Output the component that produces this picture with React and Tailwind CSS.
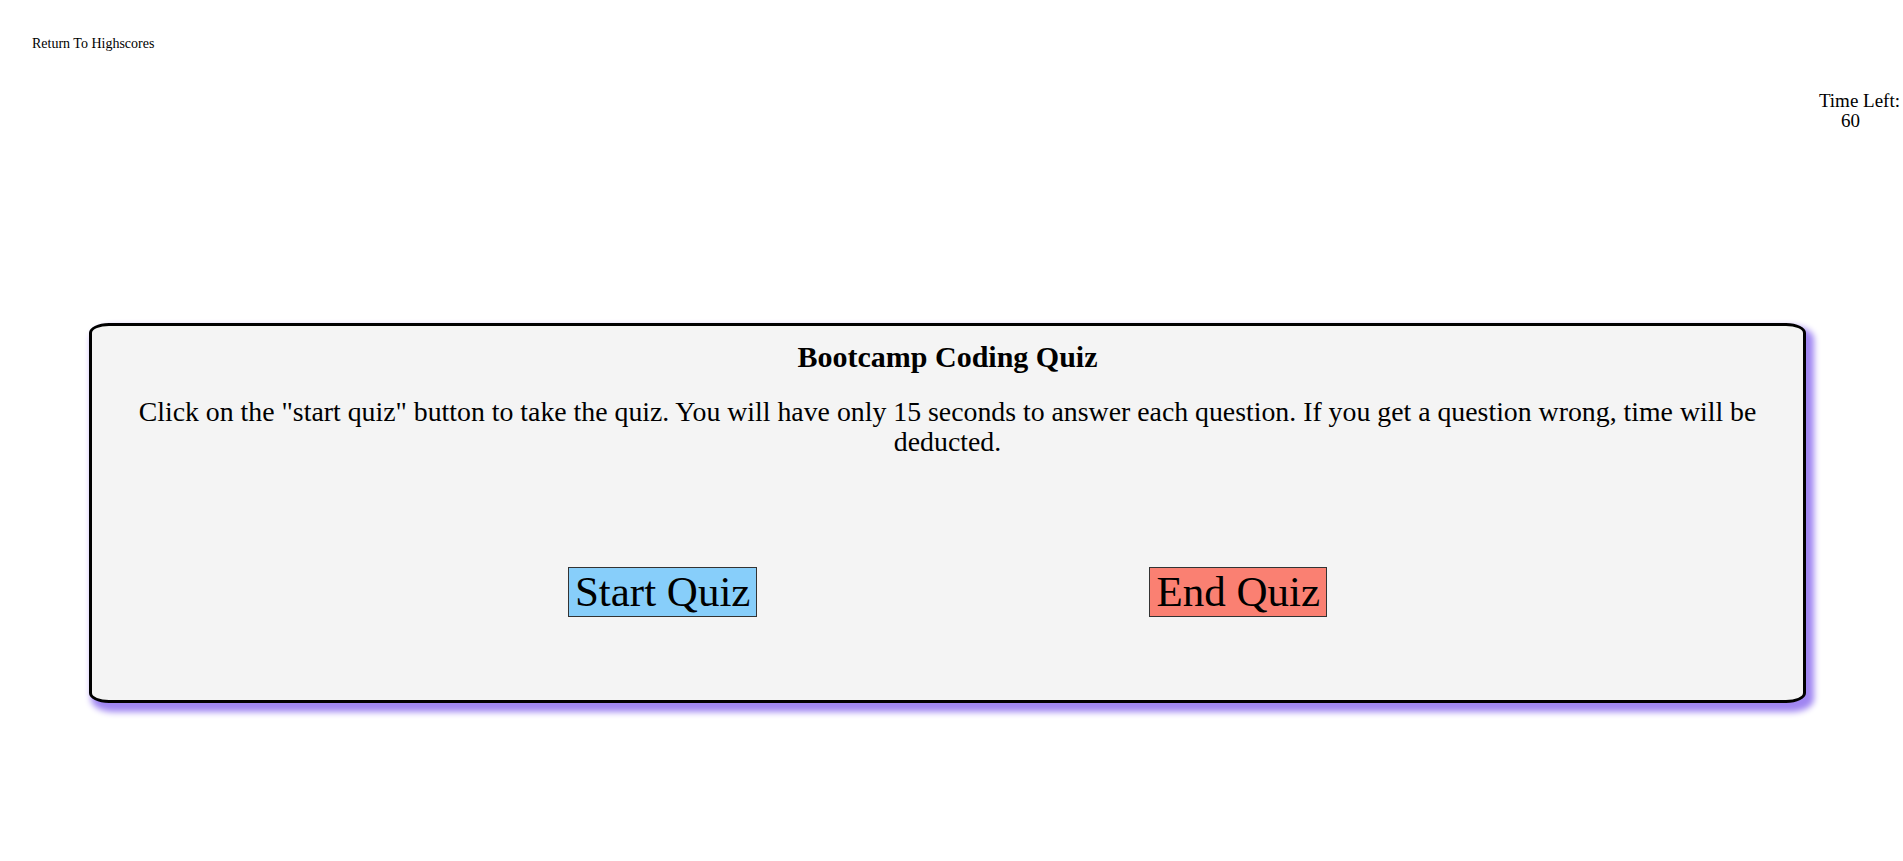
// Coding quiz start screen

export default function App() {
  return (
    <div className="min-h-[861px] w-full bg-white text-black font-['Liberation_Serif','Times_New_Roman',serif]">
      {/* Header */}
      <div className="flex flex-col pt-[36px]">
        <a className="ml-[32px] text-[14px] leading-[16px] text-black self-start">Return To Highscores</a>
        <div className="self-end mt-[39px] mr-[3px] flex flex-col items-end text-[19px] leading-[20px]">
          <span>Time Left:</span>
          <span className="mr-[40px]">60</span>
        </div>
      </div>

      {/* Quiz card */}
      <div className="ml-[89px] mt-[192px] w-[1717px] bg-[#f4f4f4] border-[3px] border-black rounded-[20px_/_10px] shadow-[5px_6px_6px_3px_#a086f2] pt-[14px] pb-[83px]">
        <h1 className="text-center text-[30px] leading-[34px] font-bold">Bootcamp Coding Quiz</h1>
        <p className="mt-[23px] px-[20px] text-center text-[27.8px] leading-[30px]">
          Click on the "start quiz" button to take the quiz. You will have only 15 seconds to answer each question. If you get a question wrong, time will be deducted.
        </p>
        <div className="mt-[110px] flex justify-center gap-[392px]">
          <button className="h-[50px] px-[6px] border border-[#333] bg-[#87cefa] text-[43px] leading-[46px] text-black">
            Start Quiz
          </button>
          <button className="h-[50px] px-[6px] border border-[#333] bg-[#fa8072] text-[43px] leading-[46px] text-black">
            End Quiz
          </button>
        </div>
      </div>
    </div>
  );
}
